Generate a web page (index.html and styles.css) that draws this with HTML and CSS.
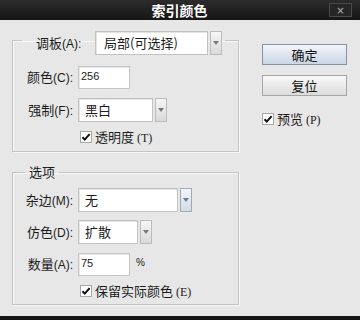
FILE: index.html
```html
<!DOCTYPE html>
<html lang="zh-CN">
<head>
    <meta charset="UTF-8">
    <title>索引颜色</title>
    <link rel="stylesheet" href="styles.css">
</head>
<body>
    <div class="titlebar">
        <span class="title">索引颜色</span>
        <span class="close">×</span>
    </div>

    <div class="dialog">
        <div class="panels">
            <fieldset class="group">
                <legend class="legend-row">
                    <span class="legend-label">调板<span class="key">(A):</span></span>
                    <span class="select w-palette">局部(可选择)</span>
                    <span class="drop"><svg width="6" height="4" viewBox="0 0 6 4"><path d="M0 0h6L3 4z" fill="#7a7a7a"/></svg></span>
                </legend>
                <div class="row first">
                    <span class="lbl">颜色<span class="key">(C):</span></span>
                    <span class="field">256</span>
                </div>
                <div class="row">
                    <span class="lbl">强制<span class="key">(F):</span></span>
                    <span class="select w-force">黑白</span>
                    <span class="drop"><svg width="6" height="4" viewBox="0 0 6 4"><path d="M0 0h6L3 4z" fill="#7a7a7a"/></svg></span>
                </div>
                <div class="row check-row">
                    <span class="check"><svg width="10" height="10" viewBox="0 0 10 10"><path d="M1.5 5.2l2.3 2.4L8.6 2.2" fill="none" stroke="#111" stroke-width="2"/></svg></span>
                    <span class="check-text">透明度 <span class="hot">(T)</span></span>
                </div>
            </fieldset>

            <fieldset class="group options">
                <legend class="legend-text">选项</legend>
                <div class="row first">
                    <span class="lbl">杂边<span class="key">(M):</span></span>
                    <span class="select w-matte">无</span>
                    <span class="drop drop-blue"><svg width="6" height="4" viewBox="0 0 6 4"><path d="M0 0h6L3 4z" fill="#6b7b90"/></svg></span>
                </div>
                <div class="row">
                    <span class="lbl">仿色<span class="key">(D):</span></span>
                    <span class="select w-dither">扩散</span>
                    <span class="drop"><svg width="6" height="4" viewBox="0 0 6 4"><path d="M0 0h6L3 4z" fill="#7a7a7a"/></svg></span>
                </div>
                <div class="row amount">
                    <span class="lbl">数量<span class="key">(A):</span></span>
                    <span class="field">75</span>
                    <span class="unit">%</span>
                </div>
                <div class="row check-row">
                    <span class="check"><svg width="10" height="10" viewBox="0 0 10 10"><path d="M1.5 5.2l2.3 2.4L8.6 2.2" fill="none" stroke="#111" stroke-width="2"/></svg></span>
                    <span class="check-text">保留实际颜色 <span class="hot">(E)</span></span>
                </div>
            </fieldset>
        </div>

        <div class="actions">
            <button class="btn btn-primary">确定</button>
            <button class="btn">复位</button>
            <div class="preview">
                <span class="check"><svg width="10" height="10" viewBox="0 0 10 10"><path d="M1.5 5.2l2.3 2.4L8.6 2.2" fill="none" stroke="#111" stroke-width="2"/></svg></span>
                <span class="check-text">预览 <span class="hot">(P)</span></span>
            </div>
        </div>
    </div>
</body>
</html>
```

FILE: styles.css
```css
* {
    box-sizing: border-box;
}

body {
    margin: 0;
    width: 360px;
    height: 320px;
    overflow: hidden;
    background: #151515;
    font-family: "Noto Sans CJK SC", sans-serif;
    font-size: 13px;
    color: #1c1c1c;
}

/* title bar */
.titlebar {
    height: 20px;
    display: flex;
    align-items: center;
    background: linear-gradient(#2c2c2c, #161616);
}
.title {
    flex: 1;
    padding-left: 30px;
    text-align: center;
    color: #fff;
    font-weight: bold;
    font-size: 14px;
    line-height: 20px;
}
.close {
    width: 23px;
    height: 14px;
    margin-right: 8px;
    border: 1px solid #4a4a4a;
    background: #262626;
    color: #b8b8b8;
    font-family: "DejaVu Sans", sans-serif;
    font-size: 10px;
    display: flex;
    align-items: center;
    justify-content: center;
}

/* dialog body */
.dialog {
    height: 296px;
    display: flex;
    padding-left: 12px;
    background: #e7e7e7;
}
.panels {
    width: 227px;
    padding-top: 5px;
}

.group {
    margin: 0;
    padding: 0 0 8px 0;
    min-width: 0;
    border: 1px solid #c3c3c3;
    box-shadow: inset 1px 1px 0 #f8f8f8, 1px 1px 0 #f8f8f8;
}
.options {
    margin-top: 12px;
    padding-bottom: 7px;
}

.legend-row {
    display: flex;
    align-items: center;
    margin-left: 9px;
    padding: 6px 3px 0 14px;
    line-height: 16px;
}
.legend-label {
    width: 59px;
}
.legend-text {
    margin-left: 12px;
    padding: 0 4px;
    line-height: 16px;
}

.key {
    font-family: "Liberation Sans", sans-serif;
    font-size: 12px;
}
.hot {
    font-family: "Liberation Serif", serif;
    font-size: 12px;
}

.row {
    display: flex;
    align-items: center;
    margin-top: 9px;
    line-height: 16px;
}
.row.first {
    margin-top: 11px;
}
.options .row.first {
    margin-top: 8px;
}
.options .row + .row {
    margin-top: 8px;
}
.options .amount,
.options .check-row {
    margin-top: 9px !important;
}
.lbl {
    width: 60px;
    margin-right: 5px;
    text-align: right;
    white-space: nowrap;
}

/* controls */
.select {
    height: 24px;
    padding-left: 6px;
    line-height: 22px;
    background: #fff;
    border: 1px solid #c2c2c2;
    box-shadow: inset 1px 1px 0 #e4e4e4;
}
.w-palette { width: 113px; padding-left: 8px; }
.w-force { width: 75px; }
.w-matte { width: 100px; }
.w-dither { width: 60px; }

.drop {
    width: 12px;
    height: 24px;
    margin-left: 2px;
    display: flex;
    align-items: center;
    justify-content: center;
    background: linear-gradient(#f6f6f6, #d9d9d9);
    border: 1px solid #bcbcbc;
}
.drop-blue {
    background: linear-gradient(#f2f5f9, #d3dbe6);
    border-color: #9fabbb;
}

.field {
    width: 52px;
    height: 23px;
    padding: 2px 0 0 2px;
    line-height: 14px;
    background: #fff;
    border: 1px solid #c6c6c6;
    box-shadow: inset 1px 1px 0 #e6e6e6;
    font-family: "Liberation Sans", sans-serif;
    font-size: 11px;
}
.unit {
    margin-left: 6px;
    margin-top: -3px;
    font-family: "Liberation Sans", sans-serif;
    font-size: 10px;
}

.check-row {
    height: 12px;
    padding-left: 67px;
}
.check {
    flex: none;
    width: 12px;
    height: 12px;
    display: flex;
    align-items: center;
    justify-content: center;
    background: #fff;
    border: 1px solid #a8a8a8;
}
.check-text {
    margin-left: 3px;
    line-height: 14px;
    white-space: nowrap;
}

/* right column */
.actions {
    margin-left: 23px;
    padding-top: 24px;
    display: flex;
    flex-direction: column;
    align-items: flex-start;
}
.btn {
    width: 85px;
    height: 21px;
    padding: 0;
    font-family: "Noto Sans CJK SC", sans-serif;
    font-size: 13px;
    line-height: 19px;
    color: #111;
    background: linear-gradient(#f8f8f8, #dcdcdc);
    border: 1px solid #a6a6a6;
    border-radius: 0;
}
.btn + .btn {
    margin-top: 10px;
}
.btn-primary {
    background: linear-gradient(#f2f5fa, #cbd6e6);
    border-color: #8492a8;
}
.preview {
    display: flex;
    align-items: center;
    height: 12px;
    margin-top: 17px;
}
```
